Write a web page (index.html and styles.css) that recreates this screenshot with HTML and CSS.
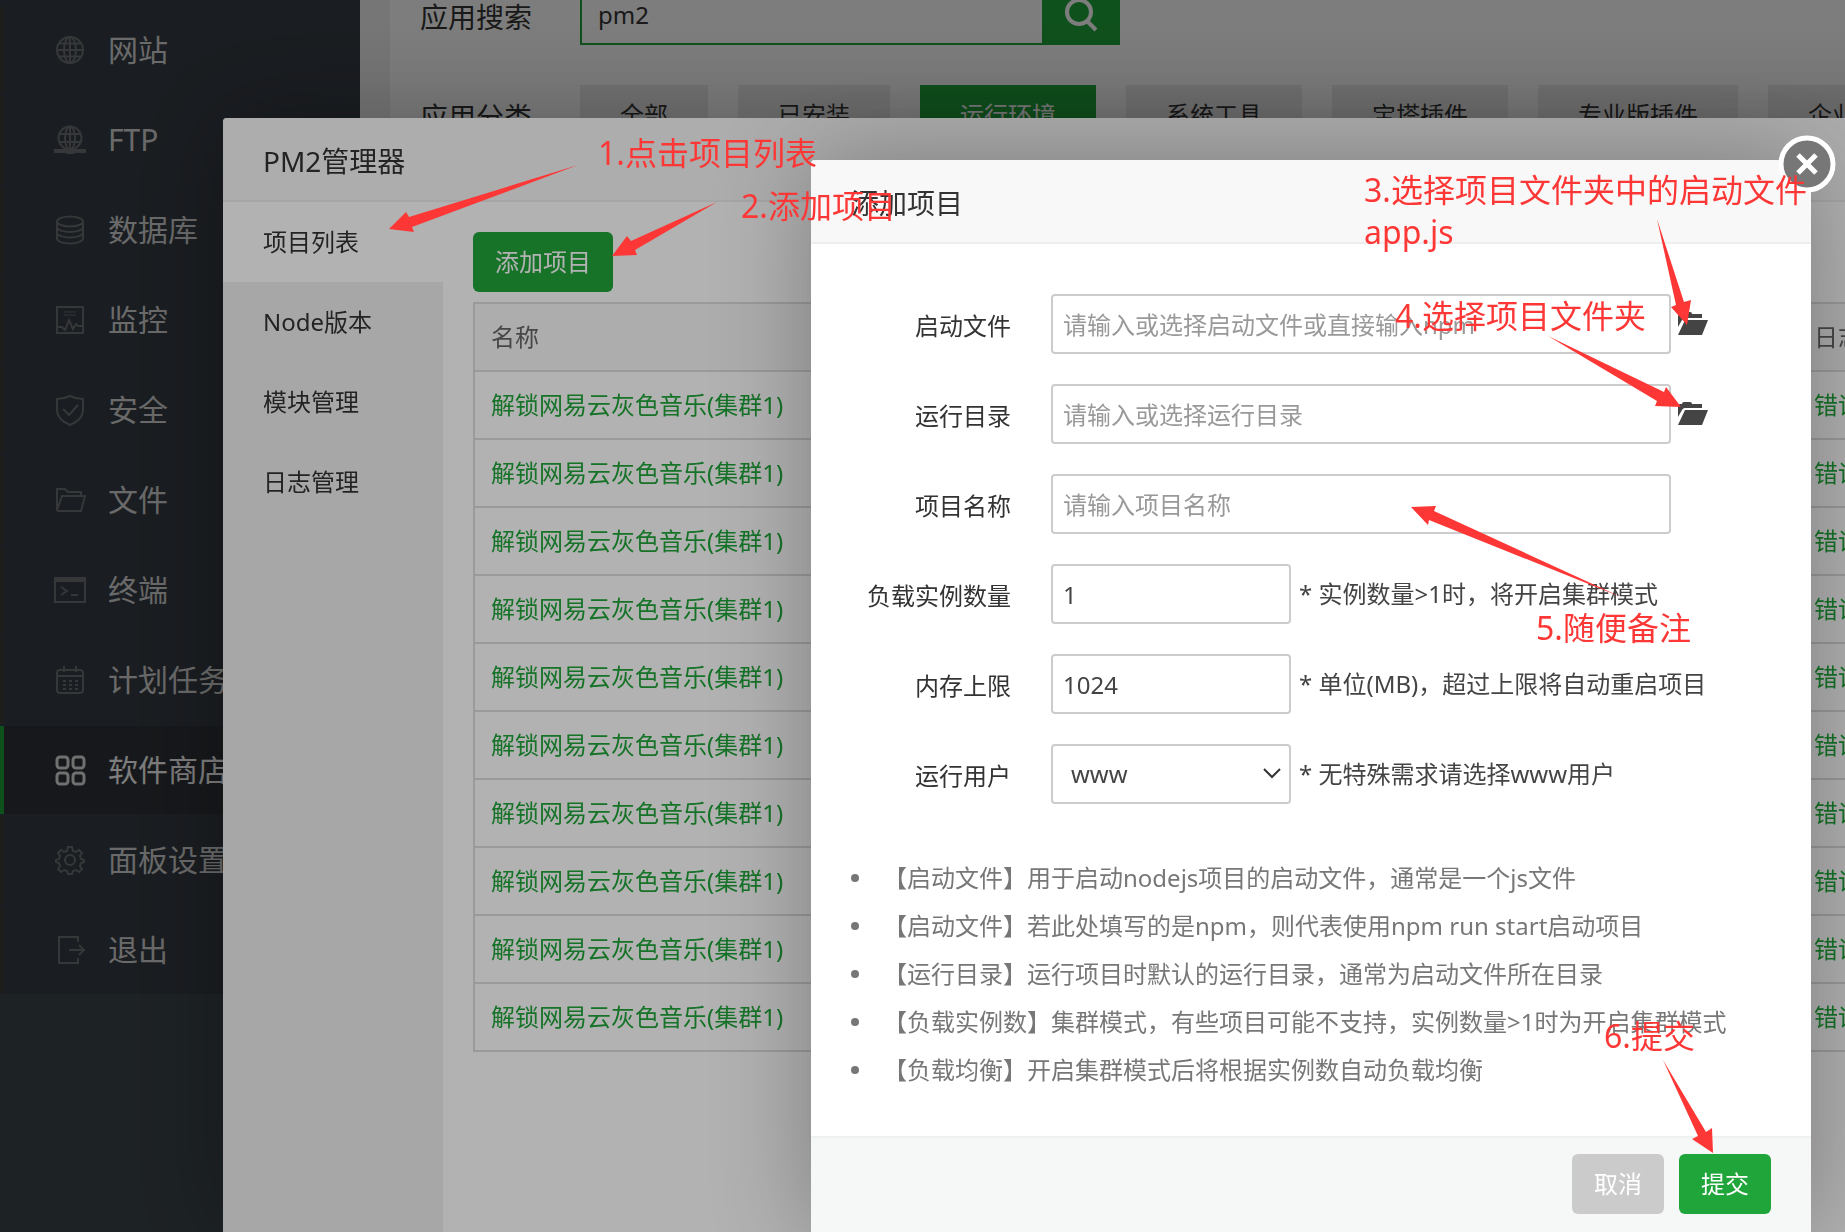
FILE: index.html
```html
<!DOCTYPE html>
<html lang="zh-CN">
<head>
<meta charset="utf-8">
<meta name="viewport" content="width=device-width, initial-scale=1">
<title>PM2管理器</title>
<link rel="stylesheet" href="styles.css">
</head>
<body>
<div class="page">
  <nav class="sidebar" aria-label="主菜单">
    <ul class="menu">
      <li><a href="#site"><svg class="menu-icon" viewBox="0 0 32 32"><circle cx="16" cy="16" r="13"/><ellipse cx="16" cy="16" rx="6" ry="13"/><path d="M16 3v26M3 16h26M5 9.500h22M5 22.500h22"/></svg>网站</a></li>
      <li><a href="#ftp"><svg class="menu-icon" viewBox="0 0 32 32"><circle cx="16" cy="14" r="11.500"/><ellipse cx="16" cy="14" rx="5" ry="11.500"/><path d="M16 3v22M5 10h22M5 18h22"/><path class="thick" d="M0 27h32M12 28h8"/></svg>FTP</a></li>
      <li><a href="#database"><svg class="menu-icon" viewBox="0 0 32 32"><ellipse cx="16" cy="7.500" rx="13" ry="5"/><path d="M3 7.500v17c0 6.500 26 6.500 26 0v-17M3 13c0 6.500 26 6.500 26 0M3 18.500c0 6.500 26 6.500 26 0"/></svg>数据库</a></li>
      <li><a href="#control"><svg class="menu-icon" viewBox="0 0 32 32"><path d="M3 3h26v26H3zM3 23h5l3 3 4-10 4 9 3-5 2 2h5"/><path class="faint" d="M10 8h12M10 11h12"/></svg>监控</a></li>
      <li><a href="#safe"><svg class="menu-icon" viewBox="0 0 32 32"><path d="M16 2c-4 2-8 3-13 3v11c0 7 6 12 13 15 7-3 13-8 13-15V5c-5 0-9-1-13-3z"/><path d="M9 15l6 6 9-10"/></svg>安全</a></li>
      <li><a href="#files"><svg class="menu-icon" viewBox="0 0 32 32"><path d="M3 26V5h8l3 3h13v4M3 26l5-14h23l-4 15H4z"/></svg>文件</a></li>
      <li><a href="#term"><svg class="menu-icon" viewBox="0 0 32 32"><path d="M1 4h30v24H1zM7 13l6 4-6 4M17 21h7"/><path class="thick" d="M1 6h30"/></svg>终端</a></li>
      <li><a href="#crontab"><svg class="menu-icon" viewBox="0 0 32 32"><rect x="3" y="6" width="26" height="23" rx="3"/><path d="M3 12h26M10 2v6M22 2v6M9 17h3M15 17h3M21 17h3M9 21h3M15 21h3M21 21h3M9 25h3M15 25h3M21 25h3"/></svg>计划任务</a></li>
      <li class="active"><a href="#soft"><svg class="menu-icon" viewBox="0 0 32 32"><rect x="3" y="3" width="11" height="11" rx="3"/><rect x="19" y="3" width="11" height="11" rx="3"/><rect x="3" y="19" width="11" height="11" rx="3"/><rect x="19" y="19" width="11" height="11" rx="3"/></svg>软件商店</a></li>
      <li><a href="#config"><svg class="menu-icon" viewBox="0 0 32 32"><path d="M14 3h4l1 4 3 1 3-2 3 3-2 3 1 3 3 1v2l-3 1-1 3 2 3-3 3-3-2-3 1-1 3h-4l-1-3-3-1-3 2-3-3 2-3-1-3-3-1v-2l3-1 1-3-2-3 3-3 3 2 3-1z"/><circle cx="16" cy="16" r="5"/></svg>面板设置</a></li>
      <li><a href="#exit"><svg class="menu-icon" viewBox="0 0 32 32"><path d="M24 8V3H5v26h19v-5M15 16h15M25 11l5 5-5 5"/></svg>退出</a></li>
    </ul>
  </nav>
  <main class="main">
    <div class="panel">
      <form class="filter-row">
        <label class="filter-label" for="app-search">应用搜索</label>
        <div class="search">
          <input class="search-input" id="app-search" type="text" value="pm2">
          <button class="search-button" type="button" aria-label="搜索"><svg width="34" height="34" viewBox="0 0 34 34"><circle cx="15" cy="14" r="12"/><path d="M23 23l9 9"/></svg></button>
        </div>
      </form>
      <div class="filter-row">
        <span class="filter-label">应用分类</span>
        <div class="categories">
          <button class="category" type="button">全部</button>
          <button class="category" type="button">已安装</button>
          <button class="category current" type="button">运行环境</button>
          <button class="category" type="button">系统工具</button>
          <button class="category" type="button">宝塔插件</button>
          <button class="category" type="button">专业版插件</button>
          <button class="category" type="button">企业版插件</button>
        </div>
      </div>
    </div>
  </main>
</div>

<div class="shade"></div>

<section class="dialog manager" aria-label="PM2管理器">
  <h2 class="dialog-title">PM2管理器</h2>
  <div class="manager-body">
    <nav class="tabs" aria-label="PM2">
      <a class="tab active" href="#list">项目列表</a>
      <a class="tab" href="#node">Node版本</a>
      <a class="tab" href="#module">模块管理</a>
      <a class="tab" href="#log">日志管理</a>
    </nav>
    <div class="manager-content">
      <button class="button primary" type="button">添加项目</button>
      <table class="projects">
        <thead><tr><th>名称</th><th class="log">日志</th></tr></thead>
        <tbody>
          <tr><td><a href="#p1">解锁网易云灰色音乐(集群1)</a></td><td><a href="#e1">错误</a></td></tr>
          <tr><td><a href="#p2">解锁网易云灰色音乐(集群1)</a></td><td><a href="#e2">错误</a></td></tr>
          <tr><td><a href="#p3">解锁网易云灰色音乐(集群1)</a></td><td><a href="#e3">错误</a></td></tr>
          <tr><td><a href="#p4">解锁网易云灰色音乐(集群1)</a></td><td><a href="#e4">错误</a></td></tr>
          <tr><td><a href="#p5">解锁网易云灰色音乐(集群1)</a></td><td><a href="#e5">错误</a></td></tr>
          <tr><td><a href="#p6">解锁网易云灰色音乐(集群1)</a></td><td><a href="#e6">错误</a></td></tr>
          <tr><td><a href="#p7">解锁网易云灰色音乐(集群1)</a></td><td><a href="#e7">错误</a></td></tr>
          <tr><td><a href="#p8">解锁网易云灰色音乐(集群1)</a></td><td><a href="#e8">错误</a></td></tr>
          <tr><td><a href="#p9">解锁网易云灰色音乐(集群1)</a></td><td><a href="#e9">错误</a></td></tr>
          <tr><td><a href="#p10">解锁网易云灰色音乐(集群1)</a></td><td><a href="#e10">错误</a></td></tr>
        </tbody>
      </table>
    </div>
  </div>
</section>

<div class="shade"></div>

<section class="dialog add-project" role="dialog" aria-label="添加项目">
  <h2 class="dialog-title">添加项目</h2>
  <button class="close" type="button" aria-label="关闭"><svg viewBox="0 0 60 60"><circle cx="30" cy="30" r="26"/><path d="M21 21l18 18M39 21L21 39"/></svg></button>
  <form class="form" id="project-form">
    <div class="field">
      <label for="start-file">启动文件</label>
      <input class="control wide" id="start-file" type="text" placeholder="请输入或选择启动文件或直接输入npm">
      <button class="folder" type="button" aria-label="选择启动文件"><svg viewBox="0 0 30 24"><path d="M0 15V4q0-2 2-2h2q0-2 2-2h6q2 0 2 2h10v4H7q-2 0-3 2z"/><path d="M7 8h23l-6 15H0z"/></svg></button>
    </div>
    <div class="field">
      <label for="run-dir">运行目录</label>
      <input class="control wide" id="run-dir" type="text" placeholder="请输入或选择运行目录">
      <button class="folder" type="button" aria-label="选择运行目录"><svg viewBox="0 0 30 24"><path d="M0 15V4q0-2 2-2h2q0-2 2-2h6q2 0 2 2h10v4H7q-2 0-3 2z"/><path d="M7 8h23l-6 15H0z"/></svg></button>
    </div>
    <div class="field">
      <label for="project-name">项目名称</label>
      <input class="control wide" id="project-name" type="text" placeholder="请输入项目名称">
    </div>
    <div class="field">
      <label for="instances">负载实例数量</label>
      <input class="control" id="instances" type="text" value="1">
      <span class="hint">* 实例数量&gt;1时，将开启集群模式</span>
    </div>
    <div class="field">
      <label for="memory">内存上限</label>
      <input class="control" id="memory" type="text" value="1024">
      <span class="hint">* 单位(MB)，超过上限将自动重启项目</span>
    </div>
    <div class="field">
      <label for="run-user">运行用户</label>
      <select class="control" id="run-user"><option>www</option></select>
      <span class="hint">* 无特殊需求请选择www用户</span>
    </div>
    <ul class="notes">
      <li>【启动文件】用于启动nodejs项目的启动文件，通常是一个js文件</li>
      <li>【启动文件】若此处填写的是npm，则代表使用npm run start启动项目</li>
      <li>【运行目录】运行项目时默认的运行目录，通常为启动文件所在目录</li>
      <li>【负载实例数】集群模式，有些项目可能不支持，实例数量&gt;1时为开启集群模式</li>
      <li>【负载均衡】开启集群模式后将根据实例数自动负载均衡</li>
    </ul>
  </form>
  <footer class="actions">
    <button class="button muted" type="button">取消</button>
    <button class="button primary" type="submit" form="project-form">提交</button>
  </footer>
</section>

<div class="guide">
  <svg class="arrows" width="100%" height="100%">
    <polygon points="389,229 406,212 409,217 578,165 412,227 414,232"/>
    <polygon points="612,256 627,236 631,241 717,202 635,250 637,255"/>
    <polygon points="1687,325 1671,307 1676,305 1657,219 1684,302 1691,300"/>
    <polygon points="1681,407 1655,406 1657,401 1548,336 1664,392 1666,387"/>
    <polygon points="1411,507 1436,506 1434,511 1621,597 1429,520 1428,525"/>
    <polygon points="1713,1153 1692,1139 1698,1136 1663,1060 1706,1132 1712,1128"/>
  </svg>
  <p class="step step-1">1.点击项目列表</p>
  <p class="step step-2">2.添加项目</p>
  <p class="step step-3">3.选择项目文件夹中的启动文件<br>app.js</p>
  <p class="step step-4">4.选择项目文件夹</p>
  <p class="step step-5">5.随便备注</p>
  <p class="step step-6">6.提交</p>
</div>
</body>
</html>
```
FILE: styles.css
```css
* {
  box-sizing: border-box;
}

body {
  margin: 0;
  overflow: hidden;
  font: 24px/36px "Noto Sans", "Noto Sans CJK SC", sans-serif;
  color: #333;
}

input,
button,
select {
  margin: 0;
  padding: 0;
  border: 0;
  font: inherit;
  color: inherit;
}

a {
  color: inherit;
  text-decoration: none;
}

.page {
  display: flex;
  min-height: 100vh;
}

/* Sidebar */
.sidebar {
  flex: none;
  width: 360px;
  background: #3c464c;
}

.menu {
  display: flex;
  flex-direction: column;
  gap: 2px;
  margin: 0;
  padding: 6px 0 0;
  background: #363c44;
  list-style: none;
}

.menu a {
  display: flex;
  align-items: center;
  gap: 22px;
  height: 88px;
  padding-left: 50px;
  border-left: 4px solid #413c39;
  background: #363c44;
  font-size: 30px;
  line-height: 44px;
  color: #d8d8d8;
}

.menu .active a {
  border-left-color: #20a53a;
  background: #2f3238;
  color: #fff;
}

.menu-icon {
  width: 32px;
  height: 32px;
  fill: none;
  stroke: #6c7074;
  stroke-width: 2;
}

.menu .active .menu-icon {
  stroke: #e4e4e4;
  stroke-width: 3;
}

.menu-icon .thick {
  stroke-width: 4;
}

.menu-icon .faint {
  stroke: #50565c;
}

/* Store page */
.main {
  flex: 1;
  min-width: 0;
  padding-left: 30px;
  background: #f0f0f0;
}

.panel {
  display: flex;
  flex-direction: column;
  gap: 36px;
  min-height: 100vh;
  margin-top: -15px;
  padding-left: 30px;
  background: #fff;
}

.filter-row {
  display: flex;
  align-items: flex-start;
}

.filter-label {
  flex: none;
  width: 160px;
  font-size: 28px;
  line-height: 64px;
}

.search {
  display: flex;
  width: 540px;
  height: 60px;
}

.search-input {
  flex: 1;
  min-width: 0;
  padding: 0 16px;
  border: 2px solid #20a53a;
  border-right: 0;
  background: #fff;
}

.search-button {
  width: 78px;
  background: #20a53a;
}

.search-button svg {
  display: block;
  margin: 0 auto;
  fill: none;
  stroke: #fff;
  stroke-width: 4;
}

.categories {
  display: flex;
  gap: 30px;
}

.category {
  flex: none;
  height: 60px;
  padding: 0 40px;
  background: #ebebeb;
}

.category.current {
  background: #20a53a;
  color: #fff;
}

/* Dialogs */
.shade {
  position: fixed;
  inset: 0;
  background: rgba(0, 0, 0, .3);
}

.dialog {
  position: fixed;
  bottom: 0;
  display: flex;
  flex-direction: column;
  border-radius: 4px 4px 0 0;
  background: #fff;
  box-shadow: 2px 2px 100px rgba(0, 0, 0, .3);
}

.dialog-title {
  flex: none;
  height: 84px;
  margin: 0;
  padding: 0 40px;
  border-bottom: 2px solid #eee;
  border-radius: 4px 4px 0 0;
  background: #f8f8f8;
  font-size: 28px;
  font-weight: 400;
  line-height: 86px;
}

.button {
  height: 60px;
  padding: 0 22px;
  border-radius: 6px;
  color: #fff;
}

.primary {
  background: #20a53a;
}

.muted {
  background: #cbcbcb;
}

.manager {
  top: 118px;
  left: 223px;
  right: -124px;
}

.manager-body {
  display: flex;
  flex: 1;
}

.tabs {
  flex: none;
  width: 220px;
  background: #f0f0f0;
}

.tab {
  display: block;
  padding-left: 40px;
  line-height: 80px;
}

.tab.active {
  background: #fff;
}

.manager-content {
  flex: 1;
  padding: 30px;
}

.projects {
  width: 100%;
  margin-top: 10px;
  border: 2px solid #ddd;
  border-collapse: collapse;
  table-layout: fixed;
}

.projects th,
.projects td {
  height: 68px;
  padding: 0 16px;
  border-bottom: 2px solid #ddd;
  text-align: left;
  font-weight: 400;
}

.projects th {
  background: #f8f8f8;
  color: #666;
}

.projects .log {
  width: 140px;
}

.projects a {
  color: #20a53a;
}

.add-project {
  top: 160px;
  right: 34px;
  width: 1000px;
}

.close {
  position: absolute;
  top: -26px;
  right: -26px;
  width: 60px;
  height: 60px;
  background: none;
}

.close svg {
  display: block;
  fill: #777;
  stroke: #fff;
  stroke-width: 5;
}

.form {
  display: flex;
  flex: 1;
  flex-direction: column;
  gap: 30px;
  padding: 50px 40px 0;
}

.field {
  display: flex;
  align-items: center;
}

.field label {
  flex: none;
  width: 160px;
  margin-right: 40px;
  padding-top: 4px;
  line-height: 56px;
  text-align: right;
}

.control {
  width: 240px;
  height: 60px;
  padding: 0 10px;
  border: 2px solid #ccc;
  border-radius: 4px;
  background: #fff;
  color: #444;
}

.control.wide {
  width: 620px;
}

.control::placeholder {
  color: #999;
  opacity: 1;
}

select.control {
  padding: 0 18px;
  appearance: none;
  background: #fff url("data:image/svg+xml,%3Csvg xmlns='http://www.w3.org/2000/svg' width='18' height='12'%3E%3Cpath d='M1 1l8 8 8-8' fill='none' stroke='%23333' stroke-width='2'/%3E%3C/svg%3E") no-repeat right 8px center;
}

.folder {
  width: 30px;
  height: 24px;
  margin-left: 7px;
  background: none;
}

.folder svg {
  display: block;
  fill: #444;
}

.hint {
  margin-left: 8px;
  color: #444;
}

.notes {
  margin: 20px 0 0;
  padding: 0;
  color: #777;
  line-height: 48px;
  list-style: none;
  white-space: nowrap;
}

.notes li {
  display: flex;
  align-items: center;
  gap: 24px;
}

.notes li::before {
  content: "";
  width: 8px;
  height: 8px;
  border-radius: 50%;
  background: #777;
}

.actions {
  display: flex;
  justify-content: flex-end;
  gap: 15px;
  height: 96px;
  padding: 16px 40px;
  border-top: 2px solid #edf1f0;
  background: #f6f8f8;
}

/* Walkthrough notes drawn over the windows */
.guide {
  position: fixed;
  inset: 0;
  pointer-events: none;
  color: #fd3735;
}

.arrows {
  display: block;
  fill: #fd3735;
}

.step {
  position: absolute;
  margin: 0;
  font-size: 32px;
  line-height: 42px;
  white-space: nowrap;
}

.step-1 {
  top: 132px;
  left: 598px;
}

.step-2 {
  top: 185px;
  left: 741px;
}

.step-3 {
  top: 169px;
  left: 1364px;
}

.step-4 {
  top: 295px;
  left: 1395px;
}

.step-5 {
  top: 607px;
  left: 1536px;
}

.step-6 {
  top: 1015px;
  left: 1604px;
}
```
